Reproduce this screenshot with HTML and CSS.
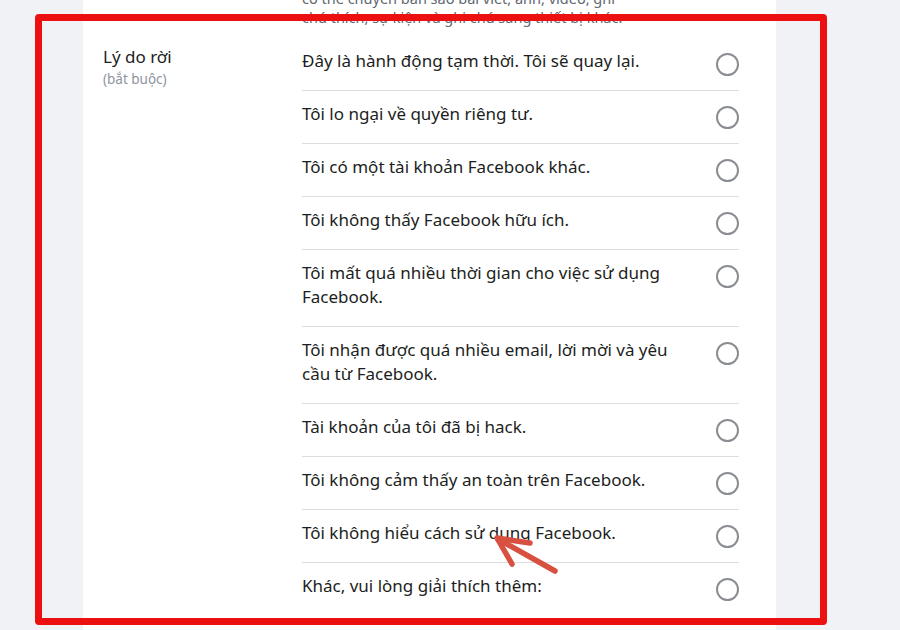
FILE: index.html
```html
<!DOCTYPE html>
<html lang="vi">
<head>
<meta charset="utf-8">
<title>Vô hiệu hóa tài khoản</title>
<link rel="stylesheet" href="styles.css">
</head>
<body>
<div class="page">
  <div class="card">
    <div class="intro-row">
      <p class="intro">có thể chuyển bản sao bài viết, ảnh, video, ghi chú thích, sự kiện và ghi chú sang thiết bị khác.</p>
    </div>
    <section class="field">
      <div class="field-label">
        <div class="label">Lý do rời</div>
        <div class="hint">(bắt buộc)</div>
      </div>
      <ul class="options">
        <li class="option"><span class="option-text">Đây là hành động tạm thời. Tôi sẽ quay lại.</span><span class="radio"></span></li>
        <li class="option"><span class="option-text">Tôi lo ngại về quyền riêng tư.</span><span class="radio"></span></li>
        <li class="option"><span class="option-text">Tôi có một tài khoản Facebook khác.</span><span class="radio"></span></li>
        <li class="option"><span class="option-text">Tôi không thấy Facebook hữu ích.</span><span class="radio"></span></li>
        <li class="option"><span class="option-text">Tôi mất quá nhiều thời gian cho việc sử dụng Facebook.</span><span class="radio"></span></li>
        <li class="option"><span class="option-text">Tôi nhận được quá nhiều email, lời mời và yêu cầu từ Facebook.</span><span class="radio"></span></li>
        <li class="option"><span class="option-text">Tài khoản của tôi đã bị hack.</span><span class="radio"></span></li>
        <li class="option"><span class="option-text">Tôi không cảm thấy an toàn trên Facebook.</span><span class="radio"></span></li>
        <li class="option"><span class="option-text">Tôi không hiểu cách sử dụng Facebook.</span><span class="radio"></span></li>
        <li class="option"><span class="option-text">Khác, vui lòng giải thích thêm:</span><span class="radio"></span></li>
      </ul>
    </section>
  </div>

  <!-- red frame drawn around the reasons section -->
  <div class="highlight"></div>

  <!-- hand-drawn pointer arrow -->
  <svg class="pointer" width="80" height="50" viewBox="0 0 80 50">
    <g fill="none" stroke="#d8503f" stroke-width="5.5" stroke-linecap="round" stroke-linejoin="round">
      <line x1="61" y1="36" x2="4" y2="4"/>
      <polyline points="36,8 3,3 18,29"/>
    </g>
  </svg>
</div>
</body>
</html>
```

FILE: styles.css
```css
* {
  box-sizing: border-box;
}

html, body {
  margin: 0;
  padding: 0;
  background: #f0f2f5;
}

body {
  font-family: "Noto Sans", "Open Sans", sans-serif;
  color: #1c1e21;
}

.page {
  position: relative;
  width: 900px;
  height: 630px;
  overflow: hidden;
}

.card {
  display: flex;
  flex-direction: column;
  margin-left: 83px;
  width: 693px;
  height: 630px;
  background: #ffffff;
  padding: 0 37px 0 20px;
}

.intro-row {
  display: grid;
  grid-template-columns: 199px 1fr;
  margin-top: -11px;
}

.intro {
  grid-column: 2;
  margin: 0;
  width: 322px;
  font-size: 14.5px;
  line-height: 19px;
  color: #606770;
}

.field {
  display: grid;
  grid-template-columns: 199px 1fr;
  margin-top: 11px;
}

.field-label {
  padding-top: 7px;
}

.label {
  font-size: 17px;
  line-height: 24px;
  color: #1c1e21;
}

.hint {
  margin-top: 1px;
  font-size: 13.5px;
  line-height: 18px;
  color: #8d949e;
}

.options {
  list-style: none;
  margin: 0;
  padding: 0;
}

.option {
  display: flex;
  align-items: flex-start;
  justify-content: space-between;
  padding: 11px 0 14px;
  border-bottom: 1px solid #dadde1;
}

.option:last-child {
  border-bottom: none;
}

.option-text {
  max-width: 396px;
  margin-bottom: 3px;
  font-size: 17px;
  line-height: 24px;
  color: #1c1e21;
}

.radio {
  flex: none;
  width: 23px;
  height: 23px;
  margin-top: 4px;
  border: 2px solid #8a8d91;
  border-radius: 50%;
  background: #fff;
}

.highlight {
  position: absolute;
  left: 35px;
  top: 14px;
  width: 792px;
  height: 611px;
  border: 7px solid #ec1010;
  border-radius: 4px;
  pointer-events: none;
}

.pointer {
  position: absolute;
  left: 494px;
  top: 535px;
  overflow: visible;
}
```
